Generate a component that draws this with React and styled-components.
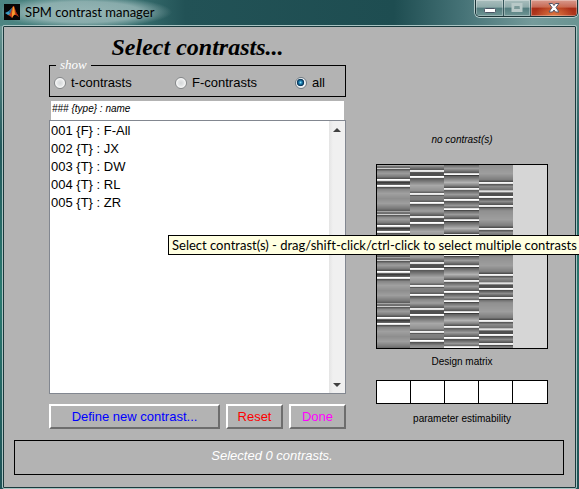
import React, { useState } from "react";
import styled, { createGlobalStyle } from "styled-components";

const sans = '"Liberation Sans", Arial, sans-serif';
const ui = 'Lato, "Open Sans", sans-serif';
const serif = '"Liberation Serif", "Times New Roman", serif';

const GlobalStyle = createGlobalStyle`
  *, *::before, *::after { box-sizing: border-box; }
  body { margin: 0; background: #24595c; overflow: hidden; font-variant-ligatures: none; }
  button, select, input { margin: 0; font: inherit; color: inherit; }
`;

const Window = styled.div`
  position: relative;
  display: flex;
  flex-direction: column;
  min-height: 100vh;
  padding: 0 1px 1px 2px;
  overflow: hidden;
  background:
    linear-gradient(90deg, #4c8582 0, #3c7474 22%, #225256 32%, #1e4d51 68%, #467377 80%, #759b9b 92%, #6a9492 100%) top / 100% 26px no-repeat,
    linear-gradient(180deg, #76a09c 0, #24595c 30%, #2b7a70 60%, #1f5156 100%);
`;

const TitleBar = styled.header`
  display: flex;
  height: 25px;
  padding-left: 2px;
  background: radial-gradient(ellipse 88px 16px at 82px 12px, #a9c3c3d0 0, #a9c3c3b0 65%, #a9c3c300 100%);
`;

const AppIcon = styled.svg`
  width: 16px;
  height: 16px;
  margin-top: 4px;
`;

const WindowTitle = styled.h1`
  flex: 1;
  margin: 0 0 0 5px;
  font: 13px/24px ${ui};
  font-variant-ligatures: none;
  color: #000;
`;

const WindowControls = styled.div`
  display: flex;
  align-self: flex-start;
  height: 17px;
  border: 1px solid #1b3437;
  border-top: 0;
  border-radius: 0 0 5px 5px;
  box-shadow: 0 0 0 1px #b6cccb;
  overflow: hidden;
`;

const ControlButton = styled.button`
  display: grid;
  place-items: center;
  width: ${(p) => (p.$close ? 47 : 27)}px;
  padding: 0;
  border: 0;
  border-left: ${(p) => (p.$first ? "0" : "1px solid #36565a")};
  background: ${(p) =>
    p.$close
      ? "radial-gradient(ellipse at 50% 100%, #e07a42 0, transparent 60%), linear-gradient(#d99a8c 0, #c66854 45%, #a82d16 50%, #b13a20 100%)"
      : "linear-gradient(#a9bebd 0, #8faaaa 45%, #537c7e 50%, #6f9594 100%)"};
  box-shadow: inset 0 0 0 1px #ffffff50;
`;

const Client = styled.main`
  flex: 1;
  display: flex;
  flex-direction: column;
  padding: 0 11px 12px 10px;
  border: 1px solid #1b3a3d;
  outline: 1px solid #a8c4c3;
  border-radius: 1px;
  margin: 1px 2px 1px 1px;
  background: #b3b3b3;
`;

const Columns = styled.div`
  flex: 1;
  display: grid;
  grid-template-columns: minmax(0, 297fr) minmax(0, 172fr);
  column-gap: 30px;
  padding: 0 16px 0 35px;
`;

const Panel = styled.section`
  display: flex;
  flex-direction: column;
`;

const Heading = styled.h2`
  margin: 6px 0 0;
  text-align: center;
  font: italic bold 24px/28px ${serif};
  color: #000;
`;

const ShowGroup = styled.fieldset`
  display: grid;
  grid-template-columns: 121fr 120fr 46fr;
  min-width: 0;
  height: 39px;
  margin: -3px 0 0;
  padding: 0 4px;
  border: 1px solid #000;
`;

const ShowLegend = styled.legend`
  margin-left: 2px;
  padding: 0 4px;
  font: italic 13px/14px ${serif};
  color: #fff;
`;

const RadioLabel = styled.label`
  display: flex;
  align-items: center;
  gap: 5px;
  height: 22px;
  font: 13px/18px ${sans};
  color: #000;
  white-space: nowrap;
`;

const Radio = styled.input`
  appearance: none;
  flex: none;
  width: 12px;
  height: 12px;
  border: 1px solid #85888a;
  border-radius: 50%;
  background: radial-gradient(circle, #d4d7d9 0, #e4e6e7 40%, #f8f8f8 65%);

  &:checked {
    border-color: #6f7a82;
    background: radial-gradient(circle at 45% 45%, #8fe0fa 0, #1e86b8 18%, #0c3d62 38%, #0c3d62 44%, #f0f2f3 52%);
  }
`;

const ListHeader = styled.label`
  height: 19px;
  margin: 4px 2px 0;
  padding-left: 1px;
  background: #fff;
  font: italic 10px/15px ${sans};
  color: #000;
`;

const ListFrame = styled.div`
  flex: 1;
  display: flex;
  border: 1px solid #828790;
  background: #fff;
`;

const ContrastList = styled.select`
  flex: 1;
  min-width: 0;
  padding: 2px 0 0;
  border: 0;
  outline: 0;
  background: #fff;
  overflow: hidden;
  font: 13px/18px ${sans};
  color: #000;

  option {
    height: 18px;
    min-height: 18px;
    padding: 0 1px;
    line-height: 18px;
  }
`;

const ScrollTrack = styled.div`
  display: flex;
  flex-direction: column;
  justify-content: space-between;
  width: 16px;
  background: linear-gradient(90deg, #e4e4e4, #f0f0f0 4px);
`;

const ScrollButton = styled.button`
  display: grid;
  place-items: center;
  height: 17px;
  padding: 0;
  border: 0;
  background: none;
`;

const Actions = styled.div`
  display: grid;
  grid-template-columns: 171fr 57fr 57fr;
  column-gap: 6px;
  margin-top: 10px;
`;

const ActionButton = styled.button`
  height: 25px;
  padding: 1px 0 0;
  border: 2px solid;
  border-color: #fff #6d6d6d #6d6d6d #fff;
  background: #b3b3b3;
  font: 13px/20px ${sans};
  color: ${(p) => p.$color};
  white-space: nowrap;
`;

const Caption = styled.p`
  margin: 0;
  text-align: center;
  font: ${(p) => (p.$italic ? "italic " : "")}10px/16px ${sans};
  color: #000;
`;

const Preview = styled(Panel)`
  padding: 105px 0 2px;
`;

const Matrix = styled.svg`
  flex: 1;
  width: 100%;
  min-height: 0;
  margin: 16px 0 5px;
  border: 1px solid #000;
  background: #d6d6d6;
`;

const Estimability = styled.div`
  display: grid;
  grid-template-columns: repeat(5, 1fr);
  height: 24px;
  margin: 10px 0 7px;
  border: 1px solid #000;
  background: #fff;
`;

const EstimabilityCell = styled.span`
  border-right: 1px solid #000;

  &:last-child { border-right: 0; }
`;

const StatusBox = styled.output`
  display: block;
  height: 35px;
  margin-top: 11px;
  padding-right: 34px;
  border: 1px solid #000;
  text-align: center;
  font: italic 13px/30px ${sans};
  color: #fff;
`;

const Tooltip = styled.div`
  position: absolute;
  top: 235px;
  left: 168px;
  min-width: calc(100% - 167px);
  height: 20px;
  padding: 0 3px;
  border: 1px solid #000;
  background: #ffffe1;
  font: 13px/18px ${ui};
  font-variant-ligatures: none;
  color: #000;
  white-space: nowrap;
`;

const PERIOD = 46;
const MATRIX_HEIGHT = 183;

// Each column repeats every 46 scans; levels are [row, grey] stops joined linearly.
const columns = [
  {
    x: 0,
    w: 33,
    peaks: { 0: 165, 3: 205, 14: 255, 15: 225, 20: 255, 21: 225 },
    levels: [[0, 120], [2, 110], [4, 90], [6, 140], [8, 155], [11, 125], [13, 85], [16, 100], [17, 60], [19, 100], [22, 85], [24, 135], [28, 160], [33, 142], [38, 158], [43, 120], [45, 95]],
  },
  {
    x: 33,
    w: 34,
    peaks: { 5: 235, 6: 225, 11: 255, 12: 235, 28: 240, 29: 225, 37: 255, 38: 225 },
    levels: [[0, 152], [4, 90], [7, 90], [8, 80], [10, 80], [13, 90], [20, 168], [25, 145], [27, 100], [30, 90], [31, 128], [34, 125], [36, 95], [39, 85], [42, 135], [45, 155]],
  },
  {
    x: 67,
    w: 35,
    peaks: { 8: 215, 9: 250, 23: 240, 24: 220, 34: 255, 35: 230, 43: 220, 44: 250 },
    levels: [[0, 110], [3, 155], [7, 90], [10, 60], [11, 100], [17, 178], [20, 130], [22, 85], [25, 95], [29, 155], [33, 95], [36, 85], [40, 150], [42, 110], [45, 75]],
  },
  {
    x: 102,
    w: 34,
    peaks: { 17: 245, 18: 225, 25: 190, 26: 225, 31: 250, 32: 235, 40: 240, 41: 230 },
    levels: [[0, 145], [8, 158], [14, 125], [16, 80], [19, 90], [21, 138], [24, 115], [27, 135], [28, 80], [30, 80], [33, 80], [36, 140], [39, 85], [42, 75], [43, 115], [45, 140]],
  },
];

function levelAt({ peaks, levels }, row) {
  const r = row % PERIOD;
  if (peaks[r]) return peaks[r];
  const next = levels.findIndex(([stop]) => stop >= r);
  const [endRow, end] = levels[next];
  if (endRow === r) return end;
  const [startRow, start] = levels[next - 1];
  return Math.round(start + ((end - start) * (r - startRow)) / (endRow - startRow));
}

function DesignMatrix() {
  return (
    <Matrix viewBox="0 0 170 183" preserveAspectRatio="none" shapeRendering="crispEdges" role="img" aria-label="Design matrix">
      {columns.map((column) =>
        Array.from({ length: MATRIX_HEIGHT }, (_, row) => {
          const v = levelAt(column, row);
          return <rect key={`${column.x}-${row}`} x={column.x} y={row} width={column.w} height="1" fill={`rgb(${v},${v},${v})`} />;
        })
      )}
      <rect x="136" y="0" width="34" height="183" fill="#d6d6d6" />
    </Matrix>
  );
}

function MatlabIcon() {
  return (
    <AppIcon viewBox="0 0 16 16" aria-hidden="true">
      <rect width="16" height="16" fill="#060606" />
      <path d="M1 9 5 7 8 4 9 3 6 11 4 11Z" fill="#3b9cc4" />
      <path d="M5 7 8 4 9 3 7 10 5 9Z" fill="#226d9b" />
      <path d="M4 11 6 10 9 2 10 2 12 8 15 13 12 11 10 11 8 14 6 12Z" fill="#c9431b" />
      <path d="M8 14 8 9 9 3 10 3 11 10 9 12Z" fill="#f5a02d" />
      <path d="M10 2 12 8 15 13 12 10Z" fill="#96200f" />
    </AppIcon>
  );
}

const contrasts = ["001 {F} : F-All", "002 {T} : JX", "003 {T} : DW", "004 {T} : RL", "005 {T} : ZR"];
const filters = ["t-contrasts", "F-contrasts", "all"];

export default function App() {
  const [filter, setFilter] = useState("all");
  return (
    <>
      <GlobalStyle />
      <Window>
        <TitleBar>
          <MatlabIcon />
          <WindowTitle>SPM contrast manager</WindowTitle>
          <WindowControls>
            <ControlButton $first aria-label="Minimize">
              <svg width="14" height="14" aria-hidden="true">
                <rect x="1.5" y="7.5" width="11" height="4" rx="1" fill="#fff" stroke="#4b5565" />
              </svg>
            </ControlButton>
            <ControlButton aria-label="Maximize" disabled>
              <svg width="14" height="14" aria-hidden="true">
                <rect x="3" y="3.5" width="8" height="6" fill="none" stroke="#b8c9c8" strokeWidth="3" />
                <rect x="5" y="5.5" width="4" height="2" fill="none" stroke="#7c9998" />
              </svg>
            </ControlButton>
            <ControlButton $close aria-label="Close">
              <svg width="14" height="14" aria-hidden="true">
                <path
                  d="M2 2.5H5.5L7 4.5 8.5 2.5H12L9 6.5 12 11H8.5L7 9 5.5 11H2L5 6.5Z"
                  fill="#fff"
                  stroke="#535666"
                />
              </svg>
            </ControlButton>
          </WindowControls>
        </TitleBar>
        <Client>
          <Columns>
            <Panel>
              <Heading>Select contrasts...</Heading>
              <ShowGroup>
                <ShowLegend>show</ShowLegend>
                {filters.map((name) => (
                  <RadioLabel key={name}>
                    <Radio type="radio" name="show" checked={filter === name} onChange={() => setFilter(name)} />
                    {name}
                  </RadioLabel>
                ))}
              </ShowGroup>
              <ListHeader htmlFor="contrasts">{"### {type} : name"}</ListHeader>
              <ListFrame>
                <ContrastList id="contrasts" multiple size={14}>
                  {contrasts.map((name) => (
                    <option key={name}>{name}</option>
                  ))}
                </ContrastList>
                <ScrollTrack>
                  <ScrollButton aria-label="Scroll up">
                    <svg width="8" height="4" aria-hidden="true"><path d="M0 4 4 0 8 4Z" fill="#404040" /></svg>
                  </ScrollButton>
                  <ScrollButton aria-label="Scroll down">
                    <svg width="8" height="4" aria-hidden="true"><path d="M0 0 4 4 8 0Z" fill="#404040" /></svg>
                  </ScrollButton>
                </ScrollTrack>
              </ListFrame>
              <Actions>
                <ActionButton $color="#0000ff">Define new contrast...</ActionButton>
                <ActionButton $color="#ff0000">Reset</ActionButton>
                <ActionButton $color="#ff00ff">Done</ActionButton>
              </Actions>
            </Panel>
            <Preview>
              <Caption $italic>no contrast(s)</Caption>
              <DesignMatrix />
              <Caption>Design matrix</Caption>
              <Estimability>
                {[1, 2, 3, 4, 5].map((n) => (
                  <EstimabilityCell key={n} />
                ))}
              </Estimability>
              <Caption>parameter estimability</Caption>
            </Preview>
          </Columns>
          <StatusBox>Selected 0 contrasts.</StatusBox>
        </Client>
        <Tooltip role="tooltip">Select contrast(s) - drag/shift-click/ctrl-click to select multiple contrasts</Tooltip>
      </Window>
    </>
  );
}
